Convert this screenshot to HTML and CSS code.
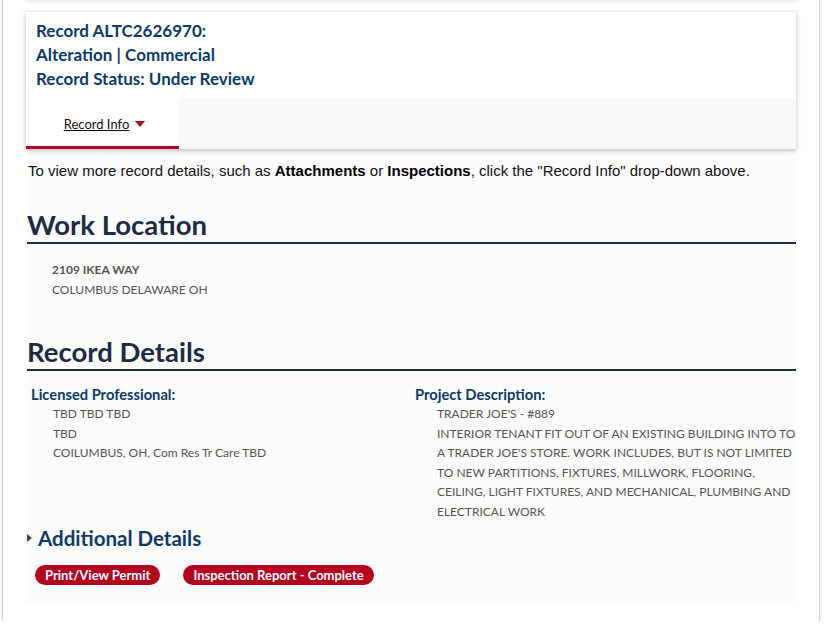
FILE: index.html
```html
<!DOCTYPE html>
<html lang="en">
<head>
    <meta charset="UTF-8">
    <meta name="viewport" content="width=device-width, initial-scale=1.0">
    <title>Record ALTC2626970</title>
    <link rel="stylesheet" href="styles.css">
</head>
<body>
    <div class="page">
        <div class="prev-card"></div>

        <!-- record header card -->
        <div class="record-card">
            <div class="record-title">
                <div>Record ALTC2626970:</div>
                <div>Alteration | Commercial</div>
                <div>Record Status: Under Review</div>
            </div>
            <div class="tab-bar">
                <a class="tab active" href="#">Record Info<span class="caret"></span></a>
            </div>
        </div>

        <div class="content">
            <p class="intro">To view more record details, such as <b>Attachments</b> or <b>Inspections</b>, click the "Record Info" drop-down above.</p>

            <h2 class="section-title">Work Location</h2>
            <div class="address">
                <div class="strong">2109 IKEA WAY</div>
                <div>COLUMBUS DELAWARE OH</div>
            </div>

            <h2 class="section-title details-title">Record Details</h2>
            <div class="details">
                <div class="col">
                    <h3 class="label">Licensed Professional:</h3>
                    <div class="values">
                        <div>TBD TBD TBD</div>
                        <div>TBD</div>
                        <div>COILUMBUS, OH, Com Res Tr Care TBD</div>
                    </div>
                </div>
                <div class="col">
                    <h3 class="label">Project Description:</h3>
                    <div class="values">
                        <div>TRADER JOE'S - #889</div>
                        <div>INTERIOR TENANT FIT OUT OF AN EXISTING BUILDING INTO TO A TRADER JOE'S STORE. WORK INCLUDES, BUT IS NOT LIMITED TO NEW PARTITIONS, FIXTURES, MILLWORK, FLOORING, CEILING, LIGHT FIXTURES, AND MECHANICAL, PLUMBING AND ELECTRICAL WORK</div>
                    </div>
                </div>
            </div>

            <h3 class="more"><span class="arrow"></span>Additional Details</h3>

            <div class="actions">
                <a class="pill" href="#">Print/View Permit</a>
                <a class="pill" href="#">Inspection Report - Complete</a>
            </div>
        </div>
    </div>
</body>
</html>
```

FILE: styles.css
```css
/* base */
body {
    margin: 0;
    font-family: Lato, "Open Sans", sans-serif;
    background: #fff;
}
.page {
    width: 770px;
    min-height: 625px;
    margin-left: 2px;
    padding: 0 23px;
    border-left: 1px solid #d6d6d6;
    border-right: 1px solid #d6d6d6;
    box-shadow: 0 0 3px rgba(0, 0, 0, 0.15);
}
/* bottom of the card above, only its shadow shows */
.prev-card {
    height: 4px;
    margin-top: -4px;
    box-shadow: 0 1px 4px rgba(0, 0, 0, 0.15);
}

/* header card */
.record-card {
    margin-top: 11px;
    border-top: 1px solid #ececec;
    background: #fff;
    box-shadow: 0 2px 5px rgba(0, 0, 0, 0.25);
}
.record-title {
    padding: 7px 10px 8px;
    color: #0b3a6b;
    font-size: 17px;
    font-weight: 700;
    line-height: 24px;
}
.tab-bar {
    display: flex;
    height: 50px;
    background: #f9f9f9;
}
.tab {
    display: flex;
    align-items: center;
    justify-content: center;
    width: 153px;
    background: #fff;
    border-bottom: 3px solid #b5001f;
    color: #111;
    font-size: 13px;
    text-decoration: underline;
    box-sizing: border-box;
    padding: 3px 0 0 4px;
}
.caret {
    display: inline-block;
    margin-left: 6px;
    border-left: 5px solid transparent;
    border-right: 5px solid transparent;
    border-top: 6px solid #b5001f;
}

/* content */
.content {
    margin-top: 10px;
    padding: 0 0 19px;
    background: #fcfcfc;
}
.intro {
    margin: 0 0 0 2px;
    padding-top: 3px;
    font-family: "Liberation Sans", Arial, sans-serif;
    font-size: 15px;
    line-height: 18px;
    color: #111;
}
.intro b { color: #000; }
.section-title {
    margin: 29px 0 0 1px;
    padding-bottom: 1px;
    border-bottom: 2px solid #1e2b45;
    color: #1e2b45;
    font-size: 27.5px;
    font-weight: 700;
    line-height: 32px;
}
.details-title { margin-top: 36px; }
.address {
    padding: 16px 0 0 26px;
    color: #555;
    font-size: 12px;
    line-height: 20px;
}
.address .strong { font-weight: 700; }

.details {
    display: grid;
    grid-template-columns: 384px 1fr;
    padding: 13px 0 0 5px;
}
.label {
    margin: 0;
    color: #0b3a6b;
    font-size: 14.7px;
    font-weight: 700;
    line-height: 20px;
}
.values {
    padding-left: 22px;
    color: #555;
    font-size: 12px;
    line-height: 19.5px;
}
.more {
    display: flex;
    align-items: center;
    margin: 4px 0 0 1px;
    color: #0b3a6b;
    font-size: 20.5px;
    font-weight: 700;
    line-height: 26px;
}
.arrow {
    margin-right: 6px;
    border-top: 4px solid transparent;
    border-bottom: 4px solid transparent;
    border-left: 5px solid #444;
}
.actions {
    display: flex;
    gap: 23px;
    padding: 14px 0 0 9px;
}
.pill {
    padding: 0 10px;
    border-radius: 10px;
    background: #b5001f;
    color: #fff;
    font-size: 13px;
    font-weight: 700;
    line-height: 20px;
    text-decoration: none;
}
```
